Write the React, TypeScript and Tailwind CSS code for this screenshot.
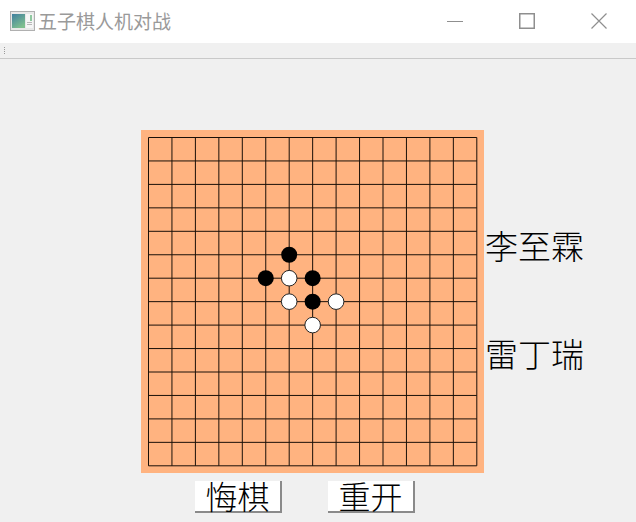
const STEP = 23.45;
const LINES = Array.from({ length: 15 }, (_, i) => i);

// stones as grid column / row
const BLACK = [[6, 5], [5, 6], [7, 6], [7, 7]];
const WHITE = [[6, 6], [6, 7], [8, 7], [7, 8]];

const CJK = "font-['Noto_Sans_CJK_SC',sans-serif]";

const Board = () => (
  <div className="w-[343px] h-[343px] bg-[#ffb380] shrink-0">
    <svg width="343" height="343" className="block">
      {LINES.map((i) => (
        <g key={i} stroke="#1a1008" strokeWidth="1">
          <line x1={7.5 + i * STEP} y1="7.5" x2={7.5 + i * STEP} y2={7.5 + 14 * STEP} />
          <line x1="7.5" y1={7.5 + i * STEP} x2={7.5 + 14 * STEP} y2={7.5 + i * STEP} />
        </g>
      ))}
      {BLACK.map(([c, r]) => (
        <circle key={`b${c}-${r}`} cx={7.5 + c * STEP} cy={7.5 + r * STEP} r="8" fill="#000" />
      ))}
      {WHITE.map(([c, r]) => (
        <circle key={`w${c}-${r}`} cx={7.5 + c * STEP} cy={7.5 + r * STEP} r="7.8" fill="#fff" stroke="#222" strokeWidth="1" />
      ))}
    </svg>
  </div>
);

const GameButton = ({ label }: { label: string }) => (
  <button className={`w-[87px] h-[32px] pb-[2px] bg-white border-r-2 border-b-2 border-r-[#8a8a8a] border-b-[#8a8a8a] text-[32px] leading-[28px] font-light text-black ${CJK}`}>
    {label}
  </button>
);

export default function App() {
  return (
    <div className="w-[636px] h-[522px] bg-[#f0f0f0] overflow-hidden flex flex-col">
      {/* title bar */}
      <div className="h-[43px] bg-white flex items-center pl-[10px]">
        <svg width="25" height="20" viewBox="0 0 25 20" className="shrink-0 -mt-[1px]">
          <rect x="0.5" y="0.5" width="24" height="19" fill="#e8e8e8" stroke="#b0b0b0" />
          <defs>
            <linearGradient id="ico" x1="0" y1="0" x2="0.6" y2="1">
              <stop offset="0" stopColor="#3f7f9f" />
              <stop offset="1" stopColor="#7fbf8f" />
            </linearGradient>
          </defs>
          <rect x="2" y="3" width="13" height="14" fill="url(#ico)" />
          <rect x="16" y="3" width="7" height="14" fill="#f6f6f6" />
          <rect x="20" y="4" width="2" height="6" fill="#8fc8a0" />
          <rect x="17" y="11" width="5" height="1" fill="#b8b8b8" />
          <rect x="17" y="13" width="5" height="1" fill="#b8b8b8" />
        </svg>
        <span className={`ml-[3px] -mt-[1px] text-[19px] text-[#9a9a9a] ${CJK}`}>五子棋人机对战</span>
        <div className="ml-auto flex items-center text-[#8f8f8f] -mt-[2px]">
          <svg width="16" height="16" viewBox="0 0 16 16" className="mr-[56px]">
            <line x1="0" y1="8.5" x2="16" y2="8.5" stroke="currentColor" />
          </svg>
          <svg width="16" height="16" viewBox="0 0 16 16" className="mr-[56px]">
            <rect x="0.75" y="0.75" width="14.5" height="14.5" fill="none" stroke="currentColor" strokeWidth="1.5" />
          </svg>
          <svg width="16" height="16" viewBox="0 0 16 16" className="mr-[29px]">
            <path d="M0.5 0.5 L15.5 15.5 M15.5 0.5 L0.5 15.5" fill="none" stroke="currentColor" strokeWidth="1.2" />
          </svg>
        </div>
      </div>

      {/* tool bar grip */}
      <div className="h-[16px] border-b border-[#c9c9c9] flex items-center pl-1 shrink-0">
        <div className="flex flex-col gap-px">
          <span className="w-px h-px bg-[#999]" />
          <span className="w-px h-px bg-[#999]" />
          <span className="w-px h-px bg-[#999]" />
          <span className="w-px h-px bg-[#999]" />
        </div>
      </div>

      {/* game area */}
      <div className="pl-[141px] pt-[71px]">
        <div className="flex">
          <Board />
          <div className={`pl-[1px] pt-[99px] flex flex-col gap-[75px] text-[33px] leading-[33px] font-light text-black ${CJK}`}>
            <span>李至霖</span>
            <span>雷丁瑞</span>
          </div>
        </div>
        <div className="flex gap-[46px] pl-[54px] pt-[8px]">
          <GameButton label="悔棋" />
          <GameButton label="重开" />
        </div>
      </div>
    </div>
  );
}
